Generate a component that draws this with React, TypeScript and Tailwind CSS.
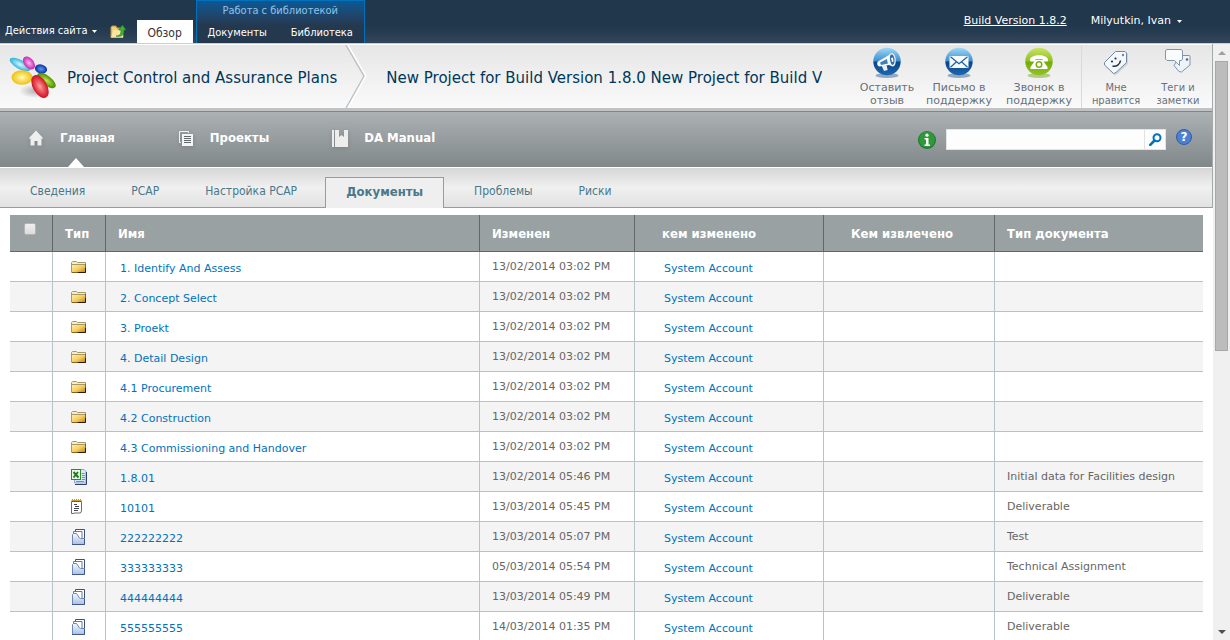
import type { ReactNode } from 'react';

type IconKind = 'folder' | 'excel' | 'note' | 'set';

interface Row {
  icon: IconKind;
  name: string;
  modified: string;
  docType?: string;
}

const rows: Row[] = [
  { icon: 'folder', name: '1. Identify And Assess', modified: '13/02/2014 03:02 PM' },
  { icon: 'folder', name: '2. Concept Select', modified: '13/02/2014 03:02 PM' },
  { icon: 'folder', name: '3. Proekt', modified: '13/02/2014 03:02 PM' },
  { icon: 'folder', name: '4. Detail Design', modified: '13/02/2014 03:02 PM' },
  { icon: 'folder', name: '4.1 Procurement', modified: '13/02/2014 03:02 PM' },
  { icon: 'folder', name: '4.2 Construction', modified: '13/02/2014 03:02 PM' },
  { icon: 'folder', name: '4.3 Commissioning and Handover', modified: '13/02/2014 03:02 PM' },
  { icon: 'excel', name: '1.8.01', modified: '13/02/2014 05:46 PM', docType: 'Initial data for Facilities design' },
  { icon: 'note', name: '10101', modified: '13/03/2014 05:45 PM', docType: 'Deliverable' },
  { icon: 'set', name: '222222222', modified: '13/03/2014 05:07 PM', docType: 'Test' },
  { icon: 'set', name: '333333333', modified: '05/03/2014 05:54 PM', docType: 'Technical Assignment' },
  { icon: 'set', name: '444444444', modified: '13/03/2014 05:49 PM', docType: 'Deliverable' },
  { icon: 'set', name: '555555555', modified: '14/03/2014 01:35 PM', docType: 'Deliverable' },
];

function RowIcon({ kind }: { kind: IconKind }) {
  const box = 'block h-4 w-4';
  if (kind === 'folder') {
    return (
      <svg viewBox="0 0 16 16" className={box} aria-label="Папка">
        <defs>
          <linearGradient id="fold" x1="0" y1="0" x2="1" y2="1">
            <stop offset="0" stopColor="#fff4c0" />
            <stop offset=".5" stopColor="#f6d060" />
            <stop offset="1" stopColor="#b87808" />
          </linearGradient>
        </defs>
        <path d="M.5 13V3.500l1-1h4l1 1h8V13z" fill="#f7ecc8" stroke="#a89868" />
        <path d="M0 5h15v9H0z" fill="url(#fold)" />
        <path d="M.5 13.500v-9M0 5.500h15" stroke="#a89868" fill="none" />
        <path d="M1 13.500h6" stroke="#80601c" />
        <path d="M7 13.500h7.500V9" fill="none" stroke="#2a1c04" />
        <path d="M14.500 9V5" stroke="#80642c" />
      </svg>
    );
  }
  if (kind === 'excel') {
    return (
      <svg viewBox="0 0 16 16" className={box} aria-label="Excel">
        <path d="M3.500.500h9.500l2 2v11.500H3.500z" fill="#dbe6f8" stroke="#8ea4cc" />
        <path d="M15.500 3v12.500H4" fill="none" stroke="#2b4271" />
        <path d="M10.500 4.500h3M11 6.500h3M11 8.500h3M5 12.500h8M11 10.500h3" stroke="#6f8fca" />
        <rect x=".5" y=".5" width="9" height="10" fill="#e9f7e6" stroke="#2d8a2d" />
        <path d="m2.500 3 5 5.500M7 3 2.500 8.500" stroke="#1c7a1c" strokeWidth="1.900" />
      </svg>
    );
  }
  if (kind === 'note') {
    return (
      <svg viewBox="0 0 16 16" className={box} aria-label="Документ">
        <path d="M.5 2.500h10V12l-1 2H4l-2 .500H.5z" fill="#fff" stroke="#6e6680" />
        <path d="M1 .500h10" stroke="#c89a2e" strokeDasharray="1 1" />
        <path d="M.5 1.500h10" stroke="#c89a2e" />
        <path d="M1 2.500h10" stroke="#6e5030" strokeDasharray="1 1" />
        <path d="M3 5.500h3M4 7.500h4M3 9.500h5M3 11.500h4" stroke="#44444e" />
      </svg>
    );
  }
  return (
    <svg viewBox="0 0 16 16" className={box} aria-label="Комплект документов">
      <defs>
        <linearGradient id="setg" x1="0" y1="0" x2="0" y2="1">
          <stop offset="0" stopColor="#f5f9ff" />
          <stop offset="1" stopColor="#a9bfe2" />
        </linearGradient>
      </defs>
      <path d="M4.500 4V.500h9V11h-2" fill="#fff" stroke="#3d5175" />
      <path d="M2.500 5V2.500h8.500V10" fill="#fff" stroke="#6078a3" />
      <path d="M1.500 15.500V5.500l1-1h3l3 4.500 1 .500h4v6z" fill="url(#setg)" stroke="#7088b5" />
      <path d="M1 15.500h12.500V10" fill="none" stroke="#40588c" />
    </svg>
  );
}

function Logo() {
  return (
    <svg viewBox="0 0 48 44" className="h-11 w-12 shrink-0" aria-label="Логотип">
      <defs>
        <radialGradient id="lc"><stop offset="0" stopColor="#d8f8ff" /><stop offset="1" stopColor="#2ab4dc" /></radialGradient>
        <radialGradient id="lm"><stop offset="0" stopColor="#ffb4f4" /><stop offset="1" stopColor="#c428ac" /></radialGradient>
        <radialGradient id="lb"><stop offset="0" stopColor="#5a9cf4" /><stop offset="1" stopColor="#0830a0" /></radialGradient>
        <radialGradient id="ly"><stop offset="0" stopColor="#fffbb0" /><stop offset="1" stopColor="#f0c010" /></radialGradient>
        <radialGradient id="lg"><stop offset="0" stopColor="#c0e850" /><stop offset="1" stopColor="#4c8c00" /></radialGradient>
        <radialGradient id="lr"><stop offset="0" stopColor="#ff9c9c" /><stop offset="1" stopColor="#d01020" /></radialGradient>
        <radialGradient id="ls"><stop offset="0" stopColor="#888" stopOpacity=".6" /><stop offset="1" stopColor="#888" stopOpacity="0" /></radialGradient>
      </defs>
      <ellipse cx="26" cy="36" rx="16" ry="7" fill="url(#ls)" />
      <ellipse cx="11" cy="9.500" rx="11.500" ry="4.500" transform="rotate(29 11 9.500)" fill="url(#lc)" />
      <ellipse cx="20" cy="8" rx="7.500" ry="4.800" transform="rotate(50 20 8)" fill="url(#lm)" />
      <ellipse cx="32" cy="14" rx="6.200" ry="4.500" transform="rotate(15 32 14)" fill="url(#lb)" />
      <ellipse cx="13" cy="22.500" rx="10.500" ry="7.300" fill="url(#ly)" />
      <ellipse cx="37.500" cy="25.500" rx="11" ry="4.800" transform="rotate(37 37.500 25.500)" fill="url(#lg)" />
      <ellipse cx="31" cy="31.500" rx="12.500" ry="7" transform="rotate(60 31 31.500)" fill="url(#lr)" />
    </svg>
  );
}

function Orb({ kind }: { kind: 'horn' | 'mail' | 'phone' }) {
  const green = kind === 'phone';
  return (
    <svg viewBox="0 0 32 32" className="h-8 w-8" aria-hidden="true">
      <defs>
        <linearGradient id={`orb-${kind}`} x1="0" y1="0" x2="0" y2="1">
          <stop offset="0" stopColor={green ? '#c8e468' : '#a0d8f8'} />
          <stop offset=".48" stopColor={green ? '#90c020' : '#3c90cc'} />
          <stop offset=".52" stopColor={green ? '#76aa0c' : '#0c4488'} />
          <stop offset="1" stopColor={green ? '#90c424' : '#1c68b0'} />
        </linearGradient>
      </defs>
      <ellipse cx="16" cy="28.500" rx="11.500" ry="2.500" fill={green ? '#8cb040' : '#5078a0'} opacity=".6" />
      <circle cx="16" cy="14.500" r="13.700" fill={`url(#orb-${kind})`} />
      {kind === 'horn' && (
        <g>
          <path d="m10.500 18.500 5-.500 1.200 5-3.700 1z" fill="#e8eef4" />
          <path d="M7 14.500 18 8c2-3 5.500-2.500 6.500 3 .800 5-.500 8.500-3 8.500L18 18l-9.500 1.500C6 19 5.500 16 7 14.500z" fill="#f8fafc" />
          <path d="M19.500 8c2-1.500 3.500.500 4 4 .300 3-.500 6-2 6-2-1-3.500-7-2-10z" fill="#2a6cac" />
          <path d="m9 15.500 7-3.500c0 1.500.500 3 1 4.500l-7 1.500z" fill="#3a80bc" />
          <path d="m20 11 2-.500.500 4-1.500.500z" fill="#fff" />
        </g>
      )}
      {kind === 'mail' && (
        <g>
          <rect x="6.500" y="9" width="19" height="12" rx="1" fill="#f6f9fc" />
          <path d="m7.500 9.800 8.500 7 8.500-7M7.500 20.200l6-5.500M24.500 20.200l-6-5.500" fill="none" stroke="#1c60a4" strokeWidth="1.200" />
        </g>
      )}
      {kind === 'phone' && (
        <g>
          <path d="M7 13c-.500-6.500 18.500-6.500 18 0l-.500 1.500h-4.500l-.500-2.500h-7l-.500 2.500H7.500z" fill="#fff" />
          <path d="M12.500 13h7l5 7v2h-17v-2z" fill="#fff" />
          <circle cx="16" cy="17.500" r="3.500" fill="#7cae14" />
          <circle cx="16" cy="17.500" r="2" fill="#fff" />
        </g>
      )}
    </svg>
  );
}

function LikeTag() {
  return (
    <svg viewBox="0 0 32 32" className="h-8 w-8" aria-hidden="true">
      <path d="M16 6h11l1 1v10L17.500 27l-3 1.500-9-9.500z" fill="#000" opacity=".1" />
      <path d="M15.500 4.500H25L26.500 6v9.500L16 25.500l-2.500 1L4.500 18v-2.500z" fill="#f4f8fc" stroke="#7188a2" />
      <circle cx="23" cy="8" r="1.200" fill="#7188a2" />
      <circle cx="12" cy="14.500" r="1.100" fill="#243444" />
      <circle cx="15.500" cy="11.500" r="1.100" fill="#243444" />
      <path d="M12.500 19c4 1 7.500-1.500 8-5.500" fill="none" stroke="#243444" strokeWidth="1.600" />
    </svg>
  );
}

function NotesTag() {
  return (
    <svg viewBox="0 0 32 32" className="h-8 w-8" aria-hidden="true">
      <path d="M18 8.500h9.500l.500 1v8.500l-8.500 7-2.500-.500-5-6z" fill="#eef3f9" stroke="#8094ac" />
      <circle cx="25" cy="12.500" r="1.200" fill="#50667f" />
      <path d="M4.500 2.500h15l1 1.500v8l-1 1.500h-2v5l-5-5H5l-1.500-1.500V4z" fill="#f9fbfd" stroke="#8094ac" />
    </svg>
  );
}

function ToolLink({ icon, children, width, narrow }: { icon: ReactNode; children: ReactNode; width: string; narrow?: boolean }) {
  return (
    <a
      href="#"
      className={`flex flex-col items-center pt-0.5 text-center text-[11px] leading-[13px] text-[#6a7079] ${width} ${
        narrow ? "font-['DejaVu_Sans_Condensed','Noto_Sans',sans-serif]" : ''
      }`}
    >
      {icon}
      <span className="mt-0.5">{children}</span>
    </a>
  );
}

const headCell = 'border-r border-b border-[#5f6769] bg-[#9aa1a3] pt-0.5 text-left align-middle';
const bodyCell = 'h-[30px] border-r border-b border-[#b5c3cb] pb-0 align-top leading-[14px]';
const subLink = 'px-[23px] pb-2';

function Caret() {
  return (
    <svg viewBox="0 0 5 3" className="h-[3px] w-[5px]" aria-hidden="true">
      <path d="M0 0h5L2.500 3z" fill="#fff" />
    </svg>
  );
}

function TopRibbon() {
  return (
    <header className="flex h-11 shrink-0 items-end border-b border-[#c9ced4] bg-linear-to-b from-[#21374c] from-60% to-[#32465c] font-['DejaVu_Sans_Condensed','Noto_Sans',sans-serif] text-[11px] text-white">
      <button type="button" className="flex h-6 items-center gap-1 pl-[5px]">
        Действия сайта
        <Caret />
      </button>
      <button type="button" className="ml-3 flex h-6 w-5 items-center" aria-label="На уровень вверх">
        <svg viewBox="0 0 18 16" className="h-4 w-[18px]" aria-hidden="true">
          <path d="M2 14.500V4l1-1h4l1 2h6v9.500z" fill="#f1cf7c" stroke="#b98d3c" />
          <path d="M2 14.500 4.500 7H14v7.500z" fill="#fbe6a6" />
          <path d="M7 13c4 0 5-2 5-6H9.500L13.500 2 17 7h-2c0 5-2 7-8 6z" fill="#3bb52c" stroke="#1d7a18" strokeWidth=".6" />
        </svg>
      </button>
      <a href="#" className="ml-2 flex h-[23px] w-14 items-center justify-center bg-white pt-0.5 text-xs text-[#333]">
        Обзор
      </a>
      <div className="ml-[3px] flex h-[43px] flex-col border-x border-t border-[#0072bc] bg-linear-to-b from-[#075895] to-[#24384e] to-60%">
        <span className="flex h-[21px] items-center justify-center text-[#8ec4ea]">Работа с библиотекой</span>
        <div className="flex h-[21px] items-center gap-6 px-[11px] pt-0.5">
          <a href="#">Документы</a>
          <a href="#">Библиотека</a>
        </div>
      </div>
      <div className="ml-auto flex items-center gap-6 self-start pt-[13px] pr-12 font-['DejaVu_Sans',sans-serif] leading-4">
        <a href="#" className="underline">Build Version 1.8.2</a>
        <button type="button" className="flex items-center gap-[6px]">
          Milyutkin, Ivan
          <Caret />
        </button>
      </div>
    </header>
  );
}

function TitleBar() {
  return (
    <div className="flex h-[67px] items-stretch border-t border-b-3 border-t-white border-b-[#c0c2c3] bg-linear-to-b from-[#e6e6e6] to-[#fafafa] text-[#003759]">
      <div className="flex min-w-0 flex-1 items-center pl-[9px]">
        <Logo />
        <a href="#" className="ml-[10px] shrink-0 pt-[3px] text-[15px]">Project Control and Assurance Plans</a>
        <svg viewBox="0 0 22 63" className="ml-2 h-full w-[22px] shrink-0" preserveAspectRatio="none" aria-hidden="true">
          <path d="M2 0 20 31 2 63" fill="none" stroke="#fff" strokeWidth="3" />
          <path d="M1 0 19 31 1 63" fill="none" stroke="#bfc3c6" strokeWidth="1.500" />
        </svg>
        <span className="ml-[19px] max-w-[438px] overflow-hidden pt-[3px] text-[15px] whitespace-nowrap">
          New Project for Build Version 1.8.0 New Project for Build V
        </span>
      </div>
      <div className="flex shrink-0 items-start">
        <ToolLink width="w-16" icon={<Orb kind="horn" />}>Оставить<br />отзыв</ToolLink>
        <ToolLink width="w-20" icon={<Orb kind="mail" />}>Письмо в<br />поддержку</ToolLink>
        <ToolLink width="w-20" icon={<Orb kind="phone" />}>Звонок в<br />поддержку</ToolLink>
        <div className="ml-0.5 flex self-stretch border-l border-[#dadada] pr-[6px]">
          <ToolLink width="w-[68px]" narrow icon={<LikeTag />}>Мне<br />нравится</ToolLink>
          <ToolLink width="w-14" narrow icon={<NotesTag />}>Теги и<br />заметки</ToolLink>
        </div>
      </div>
    </div>
  );
}

function MainNav() {
  const item = 'relative flex h-full items-center gap-4 pb-[3px]';
  return (
    <div className="flex h-[57px] items-center border-t border-b border-t-[#7f8688] border-b-white bg-linear-to-b from-[#acb1b4] to-[#81888a] text-white">
      <nav className="flex h-full items-center gap-[63px] pl-7 font-['DejaVu_Sans_Condensed','Noto_Sans',sans-serif] text-[13px] font-bold">
        <a href="#" className={item}>
          <svg viewBox="0 0 16 16" className="h-4 w-4 drop-shadow-sm" aria-hidden="true">
            <path d="M8 .500 15.500 8.500H13.500V15.500H9.500V11h-3v4.500H2.500v-7h-2z" fill="#eee" />
          </svg>
          Главная
          <svg viewBox="0 0 16 9" className="absolute bottom-0 left-10 h-[9px] w-4" aria-hidden="true">
            <path d="M0 9 8 0l8 9z" fill="#fff" />
          </svg>
        </a>
        <a href="#" className={item}>
          <svg viewBox="0 0 16 16" className="h-4 w-4 drop-shadow-sm" aria-hidden="true">
            <path d="M3 12.500H1.500V1.500h9V3" fill="none" stroke="#f2f2f2" />
            <path d="M4 4h11v12H4z" fill="#f4f4f4" />
            <path d="M6 6.500h7M6 8.500h7M6 10.500h7M6 12.500h7" stroke="#60686b" />
          </svg>
          Проекты
        </a>
        <a href="#" className={item}>
          <svg viewBox="0 0 16 17" className="h-[17px] w-4 drop-shadow-sm" aria-hidden="true">
            <path d="M0 0h2v17H0zM3 0h4v7l2.500-2L12 7V0h4v17H3z" fill="#ededed" />
          </svg>
          DA Manual
        </a>
      </nav>
      <form className="ml-auto flex items-center pr-5" onSubmit={(e) => e.preventDefault()}>
        <svg viewBox="0 0 18 18" className="mr-[10px] h-[18px] w-[18px]" aria-label="Информация">
          <circle cx="9" cy="9" r="9" fill="#1f7a2d" />
          <circle cx="9" cy="8.500" r="8" fill="#2f983b" />
          <circle cx="9" cy="4.200" r="1.600" fill="#fff" />
          <path d="M6.500 7h4v6.500H12V15H6.500v-1.500H8v-5H6.500z" fill="#fff" />
        </svg>
        <div className="flex h-[21px] border border-[#e2e4e5] bg-[#fdfdfd]">
          <input aria-label="Поиск" className="w-[197px] px-1 text-[11px] text-[#333] outline-none" />
          <button type="submit" aria-label="Найти" className="flex w-[21px] items-center justify-center border-l border-[#dfe1e2]">
            <svg viewBox="0 0 13 13" className="h-[13px] w-[13px]" aria-hidden="true">
              <circle cx="8" cy="4.700" r="3.500" fill="#fff" stroke="#0072bc" strokeWidth="2" />
              <path d="M5.500 7.500 1.300 11.800" stroke="#0072bc" strokeWidth="2.600" strokeLinecap="round" />
            </svg>
          </button>
        </div>
        <button type="button" aria-label="Справка" className="ml-[10px] flex h-4 w-4 items-center justify-center self-start rounded-full border border-[#2c5cae] bg-[#4f80d0] text-[12px] leading-none font-bold">
          ?
        </button>
      </form>
    </div>
  );
}

function SubNav() {
  return (
    <nav className="flex h-10 items-end border-b border-[#969d9f] bg-linear-to-b from-[#d6d6d6] via-[#f0f0f0] via-50% to-[#e2e2e2] pl-[7px] font-['DejaVu_Sans_Condensed','Noto_Sans',sans-serif] text-xs leading-[15px] text-[#48788a]">
      <a href="#" className={subLink}>Сведения</a>
      <a href="#" className={subLink}>PCAP</a>
      <a href="#" className={subLink}>Настройка PCAP</a>
      <a href="#" className="mr-[7px] -mb-px ml-[5px] flex h-[31px] items-center border border-b-0 border-[#969d9f] bg-[#efefef] px-5 pb-[3px] text-[13px] font-bold">
        Документы
      </a>
      <a href="#" className={subLink}>Проблемы</a>
      <a href="#" className={subLink}>Риски</a>
    </nav>
  );
}

function DocumentTable() {
  return (
    <table className="w-full table-fixed border-separate border-spacing-0 text-[11px]">
      <colgroup>
        <col className="w-[43px]" />
        <col className="w-[53px]" />
        <col className="w-[374px]" />
        <col className="w-[155px]" />
        <col className="w-[189px]" />
        <col className="w-[171px]" />
        <col />
      </colgroup>
      <thead className="font-['DejaVu_Sans_Condensed','Noto_Sans',sans-serif] text-[13px] leading-4 text-white">
        <tr className="h-[37px]">
          <th className="border-r border-b border-[#5f6769] bg-[#9aa1a3] pt-2 pl-[14px] text-left align-top">
            <input
              type="checkbox"
              aria-label="Выбрать все"
              className="block h-3 w-3 appearance-none rounded-xs border border-[#b4b4b4] bg-linear-to-b from-[#efefef] to-[#dcdcdc]"
            />
          </th>
          <th className={`${headCell} pl-3`}>Тип</th>
          <th className={`${headCell} pl-3`}>Имя</th>
          <th className={`${headCell} pl-3`}>Изменен</th>
          <th className={`${headCell} pl-[27px]`}>кем изменено</th>
          <th className={`${headCell} pl-[27px]`}>Кем извлечено</th>
          <th className="border-b border-[#5f6769] bg-[#9aa1a3] pt-0.5 pl-3 text-left">Тип документа</th>
        </tr>
      </thead>
      <tbody className="text-[#666]">
        {rows.map((row) => (
          <tr key={row.name} className="even:bg-[#f4f4f4]">
            <td className={bodyCell} />
            <td className={`${bodyCell} pt-[7px] pl-[18px]`}>
              <RowIcon kind={row.icon} />
            </td>
            <td className={`${bodyCell} pt-[10px] pl-[14px]`}>
              <a href="#" className="text-[#0072bc]">{row.name}</a>
            </td>
            <td className={`${bodyCell} pt-2 pl-3`}>{row.modified}</td>
            <td className={`${bodyCell} pt-[10px] pl-[29px]`}>
              <a href="#" className="text-[#0072bc]">System Account</a>
            </td>
            <td className={bodyCell} />
            <td className="h-[30px] border-b border-[#b5c3cb] pt-2 pl-3 align-top leading-[14px]">{row.docType}</td>
          </tr>
        ))}
      </tbody>
    </table>
  );
}

function ScrollRail() {
  return (
    <div className="flex w-[17px] shrink-0 flex-col items-center bg-[#f0f0f0]" aria-hidden="true">
      <div className="flex h-[17px] items-center">
        <svg viewBox="0 0 8 4" className="h-1 w-2"><path d="M0 4 4 0l4 4z" fill="#a0a0a0" /></svg>
      </div>
      <div className="h-[290px] w-[13px] border border-[#a8a8a8] bg-[#bcbcbc]" />
      <div className="mt-auto flex h-[17px] items-center">
        <svg viewBox="0 0 8 4" className="h-1 w-2"><path d="m0 0 4 4 4-4z" fill="#505050" /></svg>
      </div>
    </div>
  );
}

export default function App() {
  return (
    <div className="flex h-screen flex-col overflow-hidden bg-white font-['DejaVu_Sans',sans-serif]">
      <TopRibbon />
      <div className="flex min-h-0 flex-1">
        <main className="min-w-0 flex-1 overflow-hidden">
          <div className="border-r border-[#a5aaac]">
            <TitleBar />
            <MainNav />
            <SubNav />
          </div>
          <div className="px-[10px] pt-[7px]">
            <DocumentTable />
          </div>
        </main>
        <ScrollRail />
      </div>
    </div>
  );
}
